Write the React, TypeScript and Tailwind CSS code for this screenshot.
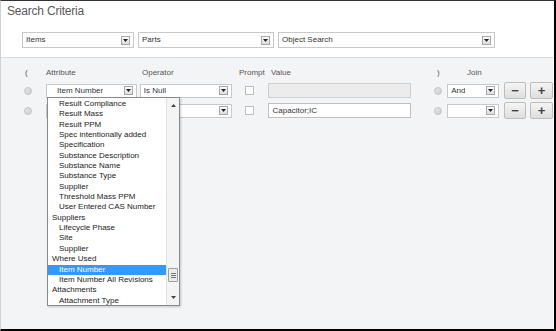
import React from 'react';

const font = { fontFamily: '"Liberation Sans", Arial, sans-serif' };

const Arrow: React.FC = () => (
  <span className="ml-auto mr-[3px] flex h-[9px] w-[9px] shrink-0 items-center justify-center border border-[#a9a9a9] bg-gradient-to-b from-[#fdfdfd] to-[#dcdcdc]">
    <svg width="5" height="3" viewBox="0 0 5 3">
      <path d="M0 0h5L2.5 3z" fill="#222" />
    </svg>
  </span>
);

interface SelectProps {
  label?: string;
  className?: string;
}

const Select: React.FC<SelectProps> = ({ label = '', className = '' }) => (
  <div className={`flex items-center border border-[#c9c9c9] bg-white text-[8px] text-[#333] ${className}`}>
    <span className="truncate">{label}</span>
    <Arrow />
  </div>
);

const Radio: React.FC<{ className?: string }> = ({ className = '' }) => (
  <span className={`block h-[8px] w-[8px] shrink-0 rounded-full border border-[#c4c4c4] bg-gradient-to-br from-[#e6e6e6] to-[#cfcfcf] ${className}`} />
);

const Check: React.FC<{ className?: string }> = ({ className = '' }) => (
  <span className={`block h-[9px] w-[9px] shrink-0 border border-[#bdbdbd] bg-white ${className}`} />
);

const PmButton: React.FC<{ sym: string; className?: string }> = ({ sym, className = '' }) => (
  <div className={`flex h-[17px] items-center justify-center rounded-[2px] border border-[#bdbdbd] bg-gradient-to-b from-[#f5f5f5] to-[#dedede] text-[13px] font-bold leading-none text-[#444] ${className}`}>
    {sym}
  </div>
);

// attribute picker contents (scrolled part that is visible)
const listItems: { t: string; lvl: number; sel?: boolean }[] = [
  { t: 'Result Compliance', lvl: 1 },
  { t: 'Result Mass', lvl: 1 },
  { t: 'Result PPM', lvl: 1 },
  { t: 'Spec intentionally added', lvl: 1 },
  { t: 'Specification', lvl: 1 },
  { t: 'Substance Description', lvl: 1 },
  { t: 'Substance Name', lvl: 1 },
  { t: 'Substance Type', lvl: 1 },
  { t: 'Supplier', lvl: 1 },
  { t: 'Threshold Mass PPM', lvl: 1 },
  { t: 'User Entered CAS Number', lvl: 1 },
  { t: 'Suppliers', lvl: 0 },
  { t: 'Lifecycle Phase', lvl: 1 },
  { t: 'Site', lvl: 1 },
  { t: 'Supplier', lvl: 1 },
  { t: 'Where Used', lvl: 0 },
  { t: 'Item Number', lvl: 1, sel: true },
  { t: 'Item Number All Revisions', lvl: 1 },
  { t: 'Attachments', lvl: 0 },
  { t: 'Attachment Type', lvl: 1 },
];

export default function App() {
  return (
    <div
      style={font}
      className="relative flex h-[331px] w-[556px] flex-col overflow-hidden border-t border-r-2 border-b-2 border-l border-t-[#333] border-r-black border-b-black border-l-[#d0d0d0] bg-white"
    >
      {/* Title + object selectors */}
      <div className="h-[56px] shrink-0">
        <div className="pl-[6px] pt-[2px] text-[12px] leading-[16px] tracking-[-0.2px] text-[#595959]">Search Criteria</div>
        <div className="mt-[13px] flex gap-[4px] pl-[21px]">
          <Select label="Items" className="h-[16px] w-[112px] pl-[3px]" />
          <Select label="Parts" className="h-[16px] w-[136px] pl-[3px]" />
          <Select label="Object Search" className="h-[16px] w-[217px] pl-[3px]" />
        </div>
      </div>

      {/* Criteria panel */}
      <div className="flex-1 border-t border-r border-t-[#dadada] border-r-white bg-[#f3f4f6] text-[8px] text-[#555]">
        <div className="mt-[9px] flex h-[12px] items-center">
          <span className="ml-[24px] w-[21px]">(</span>
          <span className="w-[96px]">Attribute</span>
          <span className="w-[97px]">Operator</span>
          <span className="w-[32px]">Prompt</span>
          <span className="w-[166px]">Value</span>
          <span className="w-[30px]">)</span>
          <span>Join</span>
        </div>

        {[0, 1].map((r) => (
          <div key={r} className="mt-[3px] flex h-[17px] items-center">
            <Radio className="ml-[23px]" />
            <Select label={r === 0 ? 'Item Number' : ''} className="ml-[14px] h-[14px] w-[91px] pl-[10px]" />
            <Select label={r === 0 ? 'Is Null' : ''} className="ml-[3px] h-[14px] w-[92px] pl-[3px]" />
            <Check className="ml-[13px]" />
            {r === 0 ? (
              <div className="ml-[14px] h-[15px] w-[144px] border border-[#cfcfcf] bg-[#ececec]" />
            ) : (
              <div className="ml-[14px] flex h-[15px] w-[144px] items-center border border-[#bfbfbf] bg-white pl-[4px] text-[8px] text-[#333]">
                Capacitor;IC
              </div>
            )}
            <Radio className="ml-[23px]" />
            <Select label={r === 0 ? 'And' : ''} className="ml-[5px] h-[14px] w-[52px] pl-[3px]" />
            <PmButton sym="−" className="ml-[5px] w-[22px]" />
            <PmButton sym="+" className="ml-[4px] w-[23px]" />
          </div>
        ))}
      </div>

      {/* Open attribute dropdown */}
      <div className="absolute left-[46px] top-[96px] flex h-[209px] w-[133px] overflow-hidden border border-[#8a8a8a] bg-white shadow-[1px_1px_2px_rgba(0,0,0,0.2)]">
        <div className="flex-1 overflow-hidden pt-[1px]">
          <div className="text-[8px] leading-[10.35px] text-[#222]">
            {listItems.map((it, i) => (
              <div
                key={i}
                className={`whitespace-nowrap ${it.lvl ? 'pl-[11px]' : 'pl-[4px]'} ${it.sel ? 'bg-[#3399ff] text-white' : ''}`}
              >
                {it.t}
              </div>
            ))}
          </div>
        </div>
        <div className="relative w-[13px] border-l border-[#e2e2e2] bg-[#f4f4f4]">
          <svg className="absolute left-[4px] top-[6px]" width="5" height="3" viewBox="0 0 5 3">
            <path d="M0 3h5L2.5 0z" fill="#444" />
          </svg>
          <div className="absolute left-[1px] top-[170px] flex h-[14px] w-[10px] flex-col items-center justify-center gap-[1px] rounded-[1px] border border-[#a0a0a0] bg-[#ebebeb]">
            <span className="block h-px w-[5px] bg-[#777]" />
            <span className="block h-px w-[5px] bg-[#777]" />
            <span className="block h-px w-[5px] bg-[#777]" />
          </div>
          <svg className="absolute bottom-[6px] left-[4px]" width="5" height="3" viewBox="0 0 5 3">
            <path d="M0 0h5L2.5 3z" fill="#444" />
          </svg>
        </div>
      </div>
    </div>
  );
}
